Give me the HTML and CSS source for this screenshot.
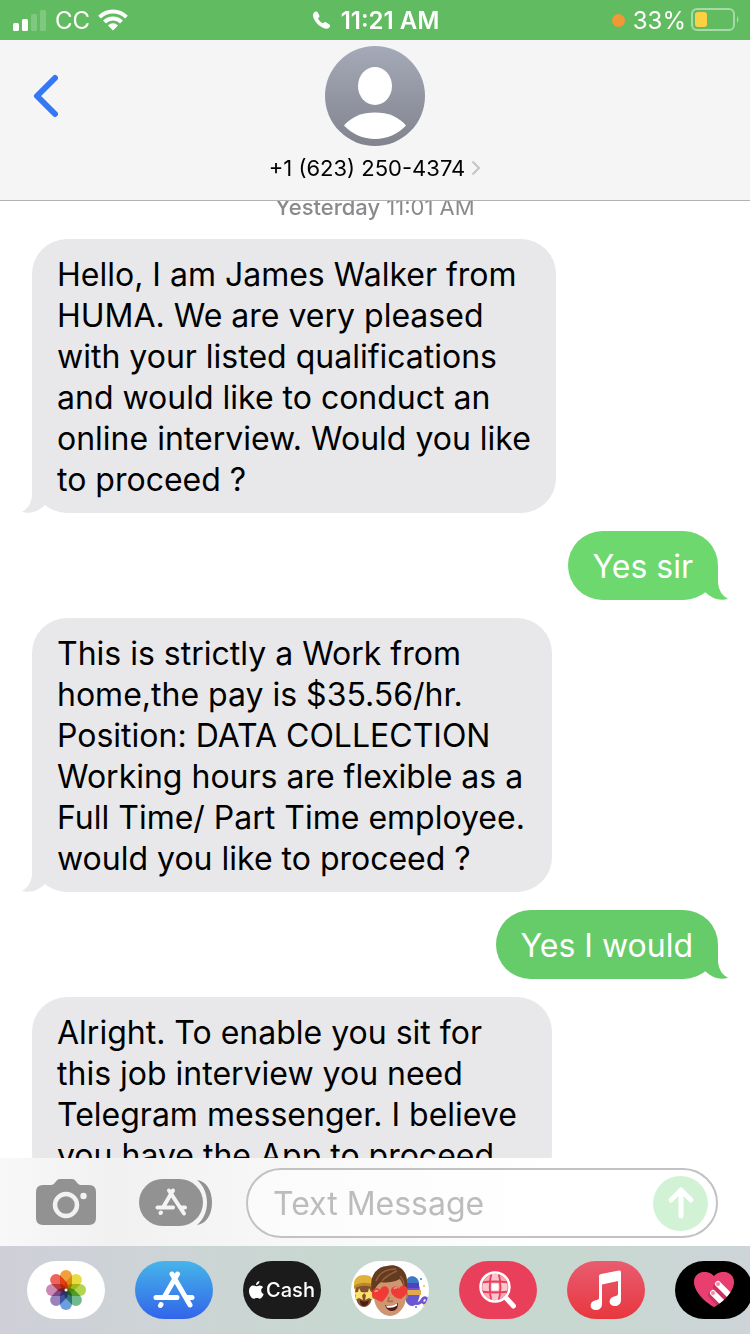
FILE: index.html
```html
<!DOCTYPE html>
<html lang="en">
<head>
    <meta charset="UTF-8">
    <meta name="viewport" content="width=device-width, initial-scale=1.0">
    <title>Messages</title>
    <link rel="stylesheet" href="styles.css">
</head>
<body>
    <div class="status-bar">
        <div class="status-left">
            <svg width="34" height="22" viewBox="0 0 34 22" fill="#fff">
                <rect x="0" y="14" width="6" height="8" rx="1.5"/>
                <rect x="9" y="10" width="6" height="12" rx="1.5"/>
                <rect x="18" y="5" width="6" height="17" rx="1.5" opacity=".2"/>
                <rect x="27" y="1" width="6" height="21" rx="1.5" opacity=".2"/>
            </svg>
            <span>CC</span>
            <svg width="30" height="22" viewBox="0 0 30 22" fill="none" stroke="#fff" stroke-width="4">
                <path d="M1.6 8.1a19 19 0 0 1 26.8 0"/>
                <path d="M6.5 13a12 12 0 0 1 17 0"/>
                <path d="M10 16.4a7 7 0 0 1 10 0l-5 5z" fill="#fff" stroke="none"/>
            </svg>
        </div>
        <div class="status-time">
            <svg width="18" height="18" viewBox="0 0 18 18" fill="#fff">
                <path d="M1 1.4C2.400 0 4 .2 4.800 1.600L6.300 4.400C6.800 5.400 6.400 6 5.600 6.700c-.6.5-.5 1 0 1.700.9 1.400 2 2.500 3.300 3.400.7.5 1.300.6 1.800 0 .7-.8 1.300-1 2.200-.5l3.200 1.900c1.300.8 1.400 2.100.3 3.200-1.300 1.300-3.300 1.600-5.500.8C6 15.400 1.900 11.100.3 6.300-.3 4.400 0 2.500 1 1.400z"/>
            </svg>
            <span>11:21 AM</span>
        </div>
        <div class="status-right">
            <span class="mic-dot"></span>
            <span>33%</span>
            <svg width="48" height="24" viewBox="0 0 48 24">
                <rect x="1" y="1" width="42" height="21" rx="5" fill="none" stroke="#fff" stroke-opacity=".45" stroke-width="2"/>
                <rect x="4" y="4" width="12" height="15" rx="3" fill="#fbd143"/>
                <path d="M46 8q3 3.500 0 7z" fill="#fff" opacity=".45"/>
            </svg>
        </div>
    </div>

    <header class="header">
        <button class="back" aria-label="Back">
            <svg width="26" height="44" viewBox="0 0 26 44" fill="none" stroke="#3478f6" stroke-width="6" stroke-linecap="round" stroke-linejoin="round">
                <path d="M23 4L5 22l18 18"/>
            </svg>
        </button>
        <button class="contact">
            <svg width="100" height="100" viewBox="0 0 100 100">
                <defs>
                    <linearGradient id="avatar" x1="0" y1="0" x2="0" y2="1">
                        <stop offset="0" stop-color="#a5aab8"/>
                        <stop offset="1" stop-color="#82838e"/>
                    </linearGradient>
                </defs>
                <circle cx="50" cy="50" r="50" fill="url(#avatar)"/>
                <ellipse cx="50" cy="40" rx="17" ry="19" fill="#fff"/>
                <path d="M19 79.500C26 71 37 66.500 50 66.500S74 71 81 79.500C73 88 62 93 50 93S27 88 19 79.500z" fill="#fff"/>
            </svg>
            <span class="contact-name">
                +1 (623) 250-4374
                <svg width="10" height="16" viewBox="0 0 10 16" fill="none" stroke="#c4c4c6" stroke-width="2">
                    <path d="M1.500 1.500L8 8l-6.500 6.500"/>
                </svg>
            </span>
        </button>
    </header>

    <main class="thread">
        <p class="timestamp"><strong>Yesterday</strong> 11:01 AM</p>
        <div class="bubble received">
            Hello, I am James Walker from<br>
            HUMA. We are very pleased<br>
            with your listed qualifications<br>
            and would like to conduct an<br>
            online interview. Would you like<br>
            to proceed ?
            <svg class="tail" width="26" height="34" viewBox="0 0 26 34"><path d="M10 0V17Q9 28 0 33Q13 36 23 26L26 0z"/></svg>
        </div>
        <div class="bubble sent">
            Yes sir
            <svg class="tail" width="26" height="34" viewBox="0 0 26 34"><path d="M16 0V17Q17 28 26 33Q13 36 3 26L0 0z"/></svg>
        </div>
        <div class="bubble received">
            This is strictly a Work from<br>
            home,the pay is $35.56/hr.<br>
            Position: DATA COLLECTION<br>
            Working hours are flexible as a<br>
            Full Time/ Part Time employee.<br>
            would you like to proceed ?
            <svg class="tail" width="26" height="34" viewBox="0 0 26 34"><path d="M10 0V17Q9 28 0 33Q13 36 23 26L26 0z"/></svg>
        </div>
        <div class="bubble sent darker">
            Yes I would
            <svg class="tail" width="26" height="34" viewBox="0 0 26 34"><path d="M16 0V17Q17 28 26 33Q13 36 3 26L0 0z"/></svg>
        </div>
        <div class="bubble received">
            Alright. To enable you sit for<br>
            this job interview you need<br>
            Telegram messenger. I believe<br>
            you have the App to proceed
        </div>
    </main>

    <form class="compose">
        <button type="button" class="tool" aria-label="Camera">
            <svg width="60" height="48" viewBox="0 0 60 48">
                <path d="M7 6h8c2 0 3-1 4.500-3C21 1 22 0 24 0h12c2 0 3 1 4.500 3C42 5 43 6 45 6h8q7 0 7 7v26q0 7-7 7H7q-7 0-7-7V13q0-7 7-7z" fill="#929292"/>
                <circle cx="30" cy="26" r="11" fill="none" stroke="#f2f2f2" stroke-width="4.500"/>
                <circle cx="47.500" cy="17" r="3.200" fill="#f2f2f2"/>
            </svg>
        </button>
        <button type="button" class="tool" aria-label="Apps">
            <svg width="74" height="48" viewBox="0 0 74 48">
                <rect width="64" height="47" rx="23.500" fill="#929292"/>
                <path d="M58 1C67 2 73 11 73 23.500S67 45 58 46C64 41 68 33 68 23.500S64 6 58 1z" fill="#929292"/>
                <g stroke="#f4f4f4" stroke-width="4" stroke-linecap="round" fill="none">
                    <path d="M34 11.500L24 28.500M30 11.500L45 34.500M18.500 28.500H34M41 28.500H46M22 33.500L21.500 34"/>
                </g>
            </svg>
        </button>
        <div class="field">
            <input type="text" aria-label="Text Message" placeholder="Text Message">
            <button type="submit" class="send" aria-label="Send">
                <svg width="28" height="34" viewBox="0 0 28 34" fill="none" stroke="#fff" stroke-width="5" stroke-linecap="round" stroke-linejoin="round">
                    <path d="M14 30V5M4 14L14 4l10 10"/>
                </svg>
            </button>
        </div>
    </form>

    <nav class="app-strip">
        <button class="app photos" aria-label="Photos">
            <svg width="42" height="42" viewBox="-21 -21 42 42">
                <g class="petals">
                    <rect x="-6" y="-20" width="12" height="20" rx="6" fill="#f2a03d"/>
                    <rect x="-6" y="-20" width="12" height="20" rx="6" fill="#e9dc3f" transform="rotate(45)"/>
                    <rect x="-6" y="-20" width="12" height="20" rx="6" fill="#b2d54e" transform="rotate(90)"/>
                    <rect x="-6" y="-20" width="12" height="20" rx="6" fill="#71ba8e" transform="rotate(135)"/>
                    <rect x="-6" y="-20" width="12" height="20" rx="6" fill="#6d9fdc" transform="rotate(180)"/>
                    <rect x="-6" y="-20" width="12" height="20" rx="6" fill="#9a83bd" transform="rotate(225)"/>
                    <rect x="-6" y="-20" width="12" height="20" rx="6" fill="#cb89b5" transform="rotate(270)"/>
                    <rect x="-6" y="-20" width="12" height="20" rx="6" fill="#ed655a" transform="rotate(315)"/>
                </g>
                <circle r="1.500" fill="#fff"/>
            </svg>
        </button>
        <button class="app store" aria-label="App Store">
            <svg width="44" height="40" viewBox="0 0 44 40" fill="none" stroke="#fff" stroke-width="5" stroke-linecap="round">
                <path d="M25.500 4L12 27.500M20 4L38 35M4 27.500H25M35 27.500H40M9 34.500L8.500 35.500"/>
            </svg>
        </button>
        <button class="app cash" aria-label="Apple Cash">
            <svg width="15" height="18" viewBox="0 0 15 18" fill="#fff">
                <path d="M10.500 0C10.600 2.200 9 4 7 4 6.900 2 8.600.2 10.500 0z"/>
                <path d="M7.400 5.200C8.200 5.200 9.200 4.300 10.800 4.400c1.400.1 2.600.7 3.300 1.800-2.900 1.700-2.400 5.600.6 6.800-.9 2.500-2.300 4.700-3.900 4.700-1.200 0-1.600-.7-3-.7s-1.900.7-3 .7C2.400 17.700 0 13.700 0 10 0 6.500 2.100 4.500 4.400 4.500c1.300 0 2.200.7 3 .7z"/>
            </svg>
            <span>Cash</span>
        </button>
        <button class="app memoji" aria-label="Memoji">
            <svg width="78" height="58" viewBox="0 0 78 58">
                <!-- left face -->
                <ellipse cx="13" cy="32" rx="9" ry="14" fill="#865132"/>
                <path d="M3 26C2 17 7 14 13 14s11 3 10 11c-6-3-14-2-20 1z" fill="#e1b23b"/>
                <path d="M3 25c6-4 14-4 20-1v3c-6-3-14-3-20 1z" fill="#b98a22"/>
                <path d="M8 27l2 4 4 .5-3 3 1 4.500-4-2-4 2 1-4.500-2-3 4-.5zM18 27l2 4 4 .5-3 3 1 4.500-4-2-4 2 1-4.500-2-3 4-.5z" fill="#fbe36a"/>
                <path d="M9 39q5 3 9 0-1 6-5 6t-4-6z" fill="#4a2015"/>
                <!-- right face -->
                <ellipse cx="61" cy="31" rx="8" ry="14" fill="#6659cf"/>
                <path d="M55 22c0-9 12-9 13 0z" fill="#3b79c6"/>
                <path d="M55 22h13v5H55z" fill="#5043b9"/>
                <path d="M56 29h14v5H56z" fill="#e4a94c"/>
                <path d="M60 40c5 4 9 3 11-1s6-2 5 1-5 2-4 0" fill="none" stroke="#7155d3" stroke-width="3"/>
                <circle cx="70" cy="18" r="1" fill="#347bd9"/>
                <circle cx="73" cy="25" r="1" fill="#f2bd3c"/>
                <circle cx="65" cy="46" r="1" fill="#347bd9"/>
                <circle cx="73" cy="44" r="1" fill="#f2bd3c"/>
                <!-- middle face -->
                <ellipse cx="23" cy="34" rx="2" ry="4" fill="#b87a58"/>
                <ellipse cx="55" cy="34" rx="2" ry="4" fill="#b87a58"/>
                <path d="M23 23c0-10 7-14 16-14s16 4 16 14v13c0 10-8 19-16 19s-16-9-16-19z" fill="#cf9570"/>
                <path d="M22 33C17 19 23 6 36 5c9-3 20 3 20 15 0 5 0 9-2 13-1-6-2-11-5-15-8 4-16 4-19 3-4 3-6 6-8 12z" fill="#643a20"/>
                <path d="M25 20C29 10 37 8 45 8M31 20c4-5 10-8 15-10M49 15c3 3 4 6 4 9" fill="none" stroke="#916039" stroke-width="1.500"/>
                <path d="M31 41C25 39 20 36 21 31c1-4 6-5 8-2 1-4 6-5 8-2 3 4-2 10-6 14zM50 38C44 37 40 34 40 29c1-4 6-5 8-1 1-4 6-5 8-1 2 4-2 8-6 11z" fill="#ef3a35"/>
                <path d="M24 31q1-2 3-1M43 28q1-2 3-1" stroke="#ff9a8c" stroke-width="1.500" fill="none"/>
                <path d="M38 36l-1 4q2 1 5 0" fill="none" stroke="#a96a49" stroke-width="1.500"/>
                <path d="M34 44q6 2 13-2 0 8-6 8-5 0-7-6z" fill="#541b18"/>
                <path d="M35 44.500q6 1 11-2v2q-4 3-10 2z" fill="#fff"/>
            </svg>
        </button>
        <button class="app images" aria-label="Images">
            <svg width="38" height="40" viewBox="0 0 38 40">
                <circle cx="16" cy="17" r="13" fill="#f9a9b5"/>
                <path d="M12 4h8v7h-8zM4 13h7v8H4zM21 13h7v8h-7zM12 23h8v7h-8z" fill="#fbc6cd"/>
                <path d="M12.500 13.500h7v7h-7z" fill="#fff"/>
                <path d="M12.500 3Q9 17 12.500 31M19.500 3q4 14 0 28M2 12.500q14-2 28 0M2 21.500q14 2 28 0" fill="none" stroke="#e93f5b" stroke-width="1.800"/>
                <circle cx="16" cy="17" r="14.500" fill="none" stroke="#fff" stroke-width="2.500"/>
                <path d="M27.500 28.500L34.500 36" stroke="#fff" stroke-width="5" stroke-linecap="round"/>
            </svg>
        </button>
        <button class="app music" aria-label="Music">
            <svg width="34" height="40" viewBox="0 0 34 40" fill="#fff">
                <path d="M10 5.500Q10 4.500 12 4L30 .5q2-.4 2 1.500V30c0 4-3 6-6 6-7 0-7-8-1-9.500 3-.6 4-1 4-3V11L13 14.500V34c0 4-3 6-6 6-7 0-7-8-1-9.500 3-.6 4-1 4-3z"/>
            </svg>
        </button>
        <button class="app touch" aria-label="Digital Touch">
            <svg width="40" height="36" viewBox="0 0 40 36">
                <defs>
                    <clipPath id="heart">
                        <path d="M20 35C12 31 0 20 0 10 0-1 14-3 20 4 26-3 40-1 40 10c0 10-12 21-20 25z"/>
                    </clipPath>
                </defs>
                <g clip-path="url(#heart)" stroke-linecap="round">
                    <path d="M0 0h40v36H0z" fill="#e93f70"/>
                    <path d="M17 23l13 14M22 15l16 16" stroke="#a82253" stroke-width="6" opacity=".45"/>
                    <path d="M19 21l14 14M24 12l16 16" stroke="#fff" stroke-width="6"/>
                    <circle cx="19" cy="21" r="2" fill="#f08aa5"/>
                    <circle cx="24" cy="12" r="2" fill="#f08aa5"/>
                </g>
            </svg>
        </button>
    </nav>
</body>
</html>
```
FILE: styles.css
```css
* {
    box-sizing: border-box;
}
body {
    font-family: Inter, "Liberation Sans", sans-serif;
    margin: 0;
    height: 100vh;
    display: flex;
    flex-direction: column;
    background-color: #fff;
    color: #000;
    overflow: hidden;
}
button {
    padding: 0;
    border: none;
    background: none;
    font-family: inherit;
    color: inherit;
    cursor: pointer;
}
svg {
    display: block;
    flex-shrink: 0;
}
.status-bar {
    display: grid;
    grid-template-columns: 1fr auto 1fr;
    align-items: center;
    height: 40px;
    padding: 0 11px 0 13px;
    background-color: #61bb61;
    color: #fff;
    font-size: 24px;
    flex-shrink: 0;
}
.status-left,
.status-time,
.status-right {
    display: flex;
    align-items: center;
    gap: 8px;
}
.status-time {
    gap: 10px;
    font-weight: 600;
}
.status-right {
    justify-content: flex-end;
    gap: 5px;
}
.mic-dot {
    width: 13px;
    height: 13px;
    margin-right: 3px;
    border-radius: 50%;
    background-color: #f09a37;
}
.header {
    display: grid;
    grid-template-columns: 1fr auto 1fr;
    padding: 6px 32px 0;
    height: 161px;
    background-color: #f5f5f5;
    border-bottom: 1px solid #b2b2b2;
    flex-shrink: 0;
}
.back {
    justify-self: start;
    align-self: start;
    margin-top: 28px;
}
.contact {
    display: flex;
    flex-direction: column;
    align-items: center;
    gap: 8px;
}
.contact-name {
    display: flex;
    align-items: center;
    gap: 6px;
    font-size: 22px;
    line-height: 28px;
}
.thread {
    flex: 1;
    min-height: 0;
    overflow: hidden;
    display: flex;
    flex-direction: column;
    gap: 18px;
    padding: 0 32px;
}
.timestamp {
    margin: 0 0 8px;
    text-align: center;
    font-size: 22px;
    line-height: 12px;
    color: #8a8a8e;
}
.timestamp strong {
    font-weight: 500;
}
.bubble {
    position: relative;
    flex-shrink: 0;
    padding: 15px 25px 13px;
    border-radius: 35px;
    font-size: 32px;
    line-height: 41px;
    white-space: nowrap;
}
.received {
    align-self: flex-start;
    min-width: 520px;
    background-color: #e8e8ea;
    fill: #e8e8ea;
}
.sent {
    align-self: flex-end;
    background-color: #6cd86e;
    fill: #6cd86e;
    color: #fff;
}
.darker {
    background-color: #66cc6a;
    fill: #66cc6a;
}
.tail {
    position: absolute;
    bottom: 0;
}
.received .tail {
    left: -10px;
}
.sent .tail {
    right: -10px;
}
.compose {
    display: flex;
    align-items: center;
    height: 88px;
    padding: 2px 32px 0 36px;
    background: linear-gradient(to right, #f8f8f8, #f1f1f1 15%, #f8f8f8 40%, #fff 75%);
    flex-shrink: 0;
}
.tool {
    margin-right: 43px;
}
.tool + .tool {
    margin-right: 33px;
}
.field {
    flex: 1;
    min-width: 0;
    display: flex;
    align-items: center;
    height: 70px;
    padding: 0 8px 0 25px;
    border: 2px solid #c2c2c4;
    border-radius: 35px;
    background-color: rgba(255, 255, 255, 0.5);
}
.field input {
    flex: 1;
    min-width: 0;
    padding: 0;
    border: none;
    outline: none;
    background: none;
    font-family: inherit;
    font-size: 32px;
}
.field input::placeholder {
    color: #bcbcbe;
    opacity: 1;
}
.send {
    display: flex;
    align-items: center;
    justify-content: center;
    width: 55px;
    height: 55px;
    border-radius: 50%;
    background-color: #d1f2d4;
}
.app-strip {
    display: flex;
    align-items: center;
    gap: 30px;
    height: 88px;
    padding: 0 27px;
    background: linear-gradient(to right, #cfcfd8, #cdd4d6 22%, #c7d8d0 45%, #c8d8d1 80%, #ced4d9);
    overflow: hidden;
    flex-shrink: 0;
}
.app {
    display: flex;
    align-items: center;
    justify-content: center;
    width: 78px;
    height: 58px;
    border-radius: 29px;
    flex-shrink: 0;
    overflow: hidden;
}
.photos,
.memoji {
    background-color: #fff;
}
.petals rect {
    mix-blend-mode: multiply;
}
.store {
    background: linear-gradient(#46b5e9, #3264ea);
}
.cash {
    gap: 2px;
    background-color: #1b1b1b;
    color: #fff;
    font-size: 20px;
    font-weight: 500;
}
.images {
    background-color: #e93f5b;
}
.music {
    background: linear-gradient(#e95c70, #e8373e);
}
.touch {
    background-color: #000;
}
```
